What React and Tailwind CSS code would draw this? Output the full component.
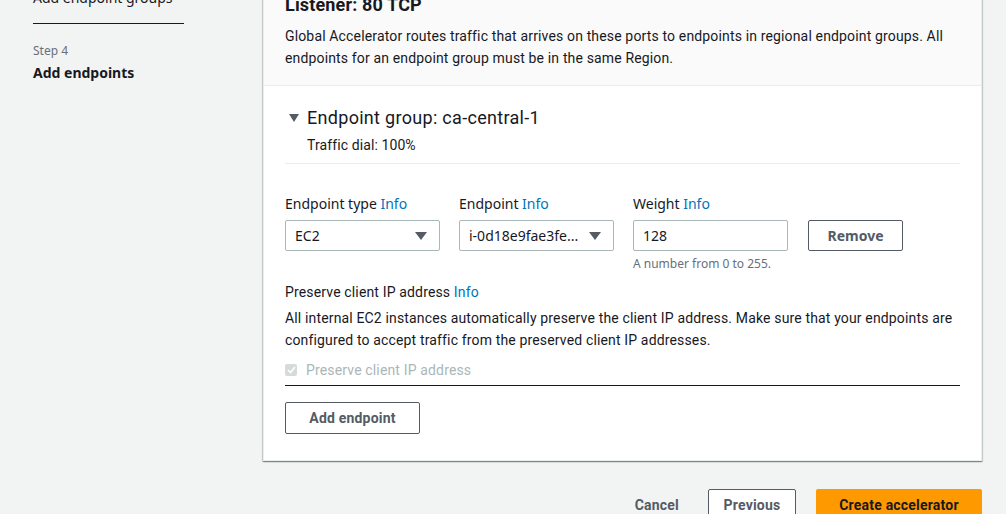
import React from 'react';

const body = { fontFamily: 'Roboto, "Liberation Sans", sans-serif' };
const form = { fontFamily: '"Noto Sans", "Open Sans", sans-serif' };

const Caret = () => (
  <svg width="12" height="8" viewBox="0 0 12 8">
    <path d="M0 0 L12 0 L6 8 Z" fill="#545b64" />
  </svg>
);

const Label = ({ text }) => (
  <div className="text-[14px] leading-[20px] text-[#16191f] mb-[6px]" style={form}>
    {text} <span className="text-[#0073bb]">Info</span>
  </div>
);

const SelectBox = ({ value }) => (
  <div className="w-[155px] h-[31px] border border-[#aab7b8] rounded-[2px] flex items-center justify-between pl-[9px] pr-[12px] text-[14px] text-[#16191f]" style={form}>
    <span className="truncate">{value}</span>
    <Caret />
  </div>
);

const App = () => {
  return (
    <div className="w-[1006px] h-[514px] overflow-hidden bg-[#f2f3f3] flex">
      {/* sidebar */}
      <div className="w-[263px] shrink-0 pl-[33px]" style={form}>
        <div className="-mt-[13px] text-[14px] leading-[22px] text-[#16191f] w-[151px] pb-[14px] border-b border-[#16191f]">
          Add endpoint groups
        </div>
        <div className="mt-[18px] text-[12px] leading-[18px] text-[#687078]">Step 4</div>
        <div className="mt-[3px] text-[14px] leading-[20px] font-bold text-[#16191f]">Add endpoints</div>
      </div>

      {/* main */}
      <div className="flex-1 pr-[24px]">
        <div className="-mt-[20px] bg-white border border-[#eaeded] shadow-[0_1px_1px_0_rgba(0,28,36,0.3),1px_1px_1px_0_rgba(0,28,36,0.15),-1px_1px_1px_0_rgba(0,28,36,0.15)]">
          <div className="bg-[#fafafa] border-b border-[#eaeded] px-[21px] pt-[12px] pb-[16px] tracking-[0.15px]" style={body}>
            <div className="text-[18px] leading-[24px] font-bold text-[#16191f]">Listener: 80 TCP</div>
            <p className="mt-[8px] text-[14px] leading-[22px] text-[#16191f]">
              Global Accelerator routes traffic that arrives on these ports to endpoints in regional endpoint groups. All endpoints for an endpoint group must be in the same Region.
            </p>
          </div>

          <div className="px-[21px] pt-[20px] pb-[26px]">
            <div className="flex items-center gap-[8px] pl-[4px] tracking-[0.3px]" style={body}>
              <svg width="10" height="8" viewBox="0 0 10 8">
                <path d="M0 0 L10 0 L5 8 Z" fill="#545b64" />
              </svg>
              <span className="text-[18px] leading-[24px] text-[#16191f]">Endpoint group: ca-central-1</span>
            </div>
            <div className="pl-[22px] mt-[5px] text-[14px] leading-[20px] text-[#16191f] tracking-[0.1px]" style={body}>Traffic dial: 100%</div>
            <div className="mt-[8px] border-t border-[#eaeded]" />

            <div className="mt-[30px] flex items-start">
              <div className="w-[174px]">
                <Label text="Endpoint type" />
                <SelectBox value="EC2" />
              </div>
              <div className="w-[174px]">
                <Label text="Endpoint" />
                <SelectBox value="i-0d18e9fae3fe..." />
              </div>
              <div className="w-[175px]">
                <Label text="Weight" />
                <div className="w-[155px] h-[31px] border border-[#aab7b8] rounded-[2px] flex items-center px-[9px] text-[14px] text-[#16191f]" style={form}>128</div>
                <div className="mt-[5px] text-[12px] leading-[16px] text-[#687078]" style={form}>A number from 0 to 255.</div>
              </div>
              <div className="pt-[26px]">
                <button className="w-[95px] h-[31px] border border-[#545b64] rounded-[2px] bg-white text-[14px] font-bold text-[#545b64]" style={form}>Remove</button>
              </div>
            </div>

            <div className="mt-[9px] tracking-[0.15px]" style={body}>
              <div className="text-[14px] leading-[22px] text-[#16191f]">
                Preserve client IP address <span className="text-[#0073bb]">Info</span>
              </div>
              <p className="mt-[4px] text-[14px] leading-[22px] text-[#16191f]">
                All internal EC2 instances automatically preserve the client IP address. Make sure that your endpoints are configured to accept traffic from the preserved client IP addresses.
              </p>
              <div className="mt-[8px] flex items-center gap-[9px] pb-[4px] border-b border-[#16191f]">
                <div className="w-[12px] h-[12px] rounded-[2px] bg-[#d5dbdb] flex items-center justify-center">
                  <svg width="9" height="8" viewBox="0 0 9 8">
                    <path d="M1 4 L3.5 6.5 L8 1" stroke="white" strokeWidth="1.6" fill="none" />
                  </svg>
                </div>
                <span className="text-[14px] leading-[22px] text-[#aab7b8]">Preserve client IP address</span>
              </div>
            </div>

            <button className="mt-[16px] w-[135px] h-[32px] border border-[#545b64] rounded-[2px] bg-white text-[14px] font-bold text-[#545b64] tracking-[0.2px]" style={body}>Add endpoint</button>
          </div>
        </div>

        <div className="mt-[28px] flex justify-end items-center" style={body}>
          <span className="text-[14px] font-bold text-[#545b64] mr-[29px] tracking-[0.2px]">Cancel</span>
          <button className="h-[32px] w-[88px] border border-[#545b64] rounded-[2px] bg-white text-[14px] font-bold text-[#545b64] mr-[20px] tracking-[0.2px]">Previous</button>
          <button className="h-[32px] w-[166px] rounded-[2px] bg-[#ff9900] text-[14px] font-bold text-[#16191f] tracking-[0.2px]">Create accelerator</button>
        </div>
      </div>
    </div>
  );
};

export default App;
